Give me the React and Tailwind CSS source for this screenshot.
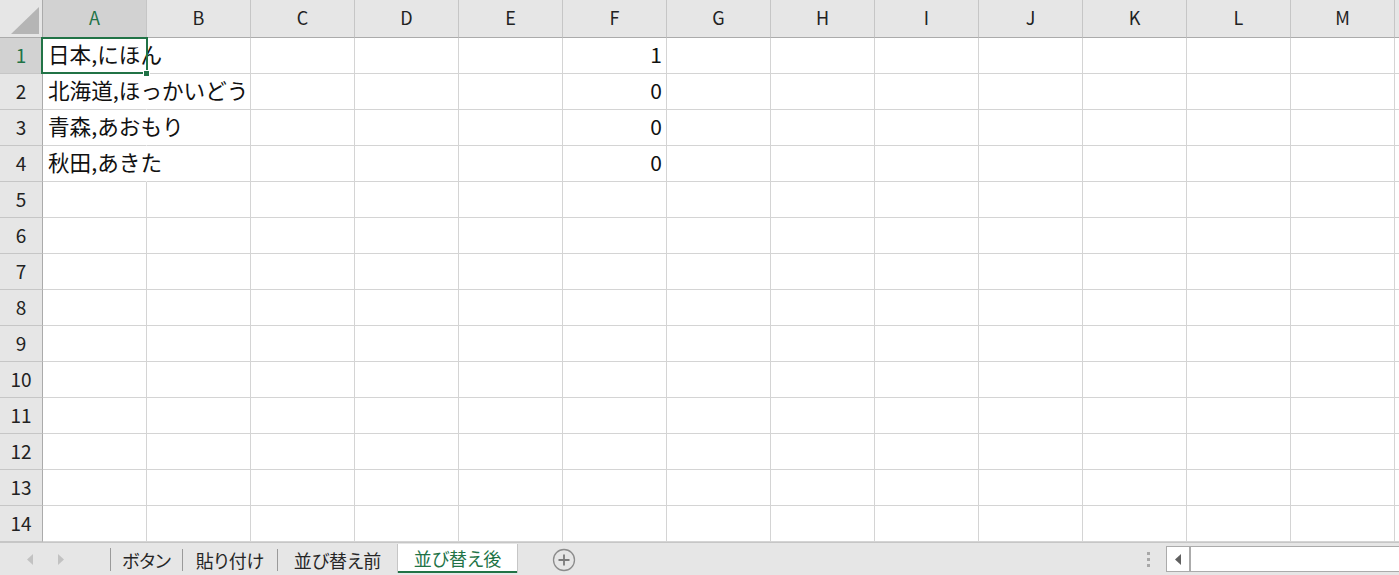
import React from "react";

const COLS = ["A", "B", "C", "D", "E", "F", "G", "H", "I", "J", "K", "L", "M", "N"];

const DATA = {
  1: { A: "日本,にほん", F: "1" },
  2: { A: "北海道,ほっかいどう", F: "0" },
  3: { A: "青森,あおもり", F: "0" },
  4: { A: "秋田,あきた", F: "0" },
};

const ROWS = Array.from({ length: 14 }, (_, i) => i + 1);

const HeaderRow = () => (
  <div className="flex h-[38px] shrink-0">
    <div className="relative w-[43px] shrink-0 bg-[#e6e6e6] border-r border-b border-[#ababab]">
      <svg className="absolute left-[11px] top-[7px]" width="29" height="27" viewBox="0 0 29 27">
        <polygon points="28,0 28,27 0,27" fill="#b5b5b5" />
      </svg>
    </div>
    {COLS.map((c) => (
      <div
        key={c}
        className={
          c === "A"
            ? "w-[104px] shrink-0 flex items-center justify-center pb-[3px] bg-[#d2d2d2] text-[#217346] border-r border-r-[#c6c6c6] border-b border-b-[#ababab] text-[18px]"
            : "w-[104px] shrink-0 flex items-center justify-center pb-[3px] bg-[#e6e6e6] text-[#222] border-r border-r-[#c6c6c6] border-b border-b-[#ababab] text-[18px]"
        }
      >
        {c === "N" ? "" : c}
      </div>
    ))}
  </div>
);

const Row = ({ n }) => {
  const row = DATA[n] || {};
  return (
    <div className="flex h-[36px] shrink-0">
      <div
        className={
          n === 1
            ? "w-[43px] shrink-0 flex items-center justify-center pb-[3px] bg-[#d2d2d2] text-[#217346] border-r border-r-[#ababab] border-b border-b-[#c6c6c6] text-[19px]"
            : "w-[43px] shrink-0 flex items-center justify-center pb-[3px] bg-[#e6e6e6] text-[#222] border-r border-r-[#ababab] border-b border-b-[#c6c6c6] text-[19px]"
        }
      >
        {n}
      </div>
      {COLS.map((c) => {
        const val = row[c];
        if (c === "A") {
          return (
            <div
              key={c}
              className={
                val
                  ? "relative w-[104px] shrink-0 flex items-center pl-[5px] pb-[4px] border-r border-r-transparent border-b border-b-[#d4d4d4] whitespace-nowrap text-[21.6px] text-[#111]"
                  : "relative w-[104px] shrink-0 border-r border-b border-[#d4d4d4]"
              }
            >
              {val}
              {n === 1 && (
                <>
                  <div className="absolute left-[-2px] top-[-1px] w-[107px] h-[37px] border-2 border-[#217346] z-10" />
                  <div className="absolute left-[100px] top-[32px] w-[7px] h-[7px] bg-[#217346] border border-white z-20" />
                </>
              )}
            </div>
          );
        }
        if (c === "F") {
          return (
            <div
              key={c}
              className="w-[104px] shrink-0 flex items-center justify-end pr-[4px] pb-[3px] border-r border-b border-[#d4d4d4] text-[21px] text-[#111]"
            >
              {val}
            </div>
          );
        }
        return <div key={c} className="w-[104px] shrink-0 border-r border-b border-[#d4d4d4]" />;
      })}
    </div>
  );
};

const Tab = ({ label, width }) => (
  <div
    className={`flex items-center justify-center h-[22px] border-r border-[#9a9a9a] text-[18px] text-[#262626] whitespace-nowrap [font-feature-settings:'palt'] ${width}`}
  >
    {label}
  </div>
);

const TabBar = () => (
  <div className="flex h-[34px] shrink-0 bg-[#e6e6e6] border-t border-[#c6c6c6]">
    <div className="flex items-center w-[111px] shrink-0 pl-[27px] gap-[24px] border-r border-[#9a9a9a] my-[5px]">
      <svg width="7" height="11" viewBox="0 0 7 11">
        <polygon points="6,0 6,11 0,5.5" fill="#c2c2c2" />
      </svg>
      <svg width="7" height="11" viewBox="0 0 7 11">
        <polygon points="0,0 0,11 6,5.5" fill="#c2c2c2" />
      </svg>
    </div>
    <div className="flex items-center">
      <Tab label="ボタン" width="w-[72px]" />
      <Tab label="貼り付け" width="w-[95px]" />
      <div className="flex items-center justify-center w-[119px] h-[22px] text-[18px] text-[#262626] whitespace-nowrap [font-feature-settings:'palt']">
        並び替え前
      </div>
    </div>
    <div className="flex flex-col w-[121px] shrink-0 h-[29px] mt-[1px] bg-white border-x border-[#c6c6c6]">
      <div className="flex-1 flex items-center justify-center text-[18px] text-[#217346] pt-[1px] [font-feature-settings:'palt']">
        並び替え後
      </div>
      <div className="h-[2px] bg-[#217346]" />
    </div>
    <div className="flex items-center pl-[34px]">
      <svg width="24" height="24" viewBox="0 0 24 24">
        <circle cx="12" cy="12" r="10.5" fill="none" stroke="#8c8c8c" strokeWidth="1.3" />
        <path d="M12 6.5v11M6.5 12h11" stroke="#7a7a7a" strokeWidth="1.8" />
      </svg>
    </div>
    <div className="flex-1" />
    <div className="flex flex-col justify-center gap-[3px] pr-[16px]">
      <div className="w-[3px] h-[3px] bg-[#a8a8a8]" />
      <div className="w-[3px] h-[3px] bg-[#a8a8a8]" />
      <div className="w-[3px] h-[3px] bg-[#a8a8a8]" />
    </div>
    <div className="flex w-[233px] shrink-0 h-[26px] mt-[3px] bg-white border border-[#ababab] border-r-0">
      <div className="w-[24px] flex items-center justify-center border-r-2 border-[#ababab]">
        <svg width="7" height="11" viewBox="0 0 7 11">
          <polygon points="6,0 6,11 0,5.5" fill="#606060" />
        </svg>
      </div>
      <div className="flex-1" />
    </div>
  </div>
);

export default function App() {
  return (
    <div className="w-[1399px] h-[575px] overflow-hidden bg-white flex flex-col font-['Noto_Sans_CJK_JP',sans-serif] leading-none">
      <HeaderRow />
      {ROWS.map((n) => (
        <Row key={n} n={n} />
      ))}
      <TabBar />
    </div>
  );
}
